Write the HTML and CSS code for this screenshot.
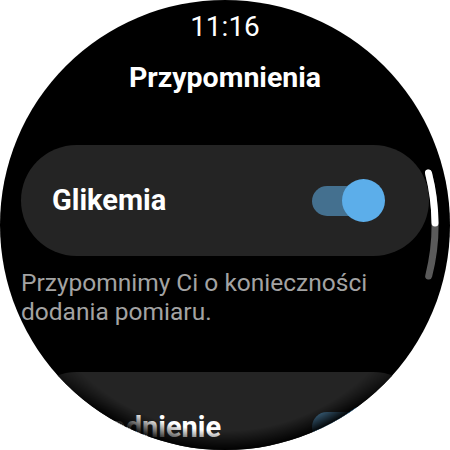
FILE: index.html
```html
<!DOCTYPE html>
<html lang="pl">
<head>
<meta charset="utf-8">
<link rel="stylesheet" href="styles.css">
</head>
<body>
<div class="watch">
  <div class="time">11:16</div>
  <h1 class="title">Przypomnienia</h1>
  <div class="card">
    <span class="label">Glikemia</span>
    <div class="toggle"><span class="track"></span><span class="thumb"></span></div>
  </div>
  <p class="desc">Przypomnimy Ci o konieczności dodania pomiaru.</p>
  <div class="card">
    <span class="label">Nawodnienie</span>
    <div class="toggle"><span class="track"></span><span class="thumb"></span></div>
  </div>
  <div class="vignette"></div>
  <svg class="scrollbar" width="450" height="450" viewBox="0 0 450 450">
    <path d="M428.5 173 A210 210 0 0 1 428.7 276" fill="none" stroke="#5a5a5a" stroke-width="7" stroke-linecap="round"/>
    <path d="M428.5 173 A210 210 0 0 1 435 223" fill="none" stroke="#ffffff" stroke-width="7" stroke-linecap="round"/>
  </svg>
</div>
</body>
</html>
```
FILE: styles.css
```css
html, body {
  margin: 0;
  padding: 0;
  background: #ffffff;
}
.watch {
  position: relative;
  width: 450px;
  height: 450px;
  border-radius: 50%;
  background: #000000;
  overflow: hidden;
  display: flex;
  flex-direction: column;
  font-family: Roboto, "Noto Sans", sans-serif;
  color: #ffffff;
}
.time {
  margin-top: 13px;
  font-size: 28px;
  line-height: 28px;
  font-weight: 400;
  text-align: center;
}
.title {
  margin: 23px 0 0;
  font-size: 28.5px;
  line-height: 28px;
  font-weight: 700;
  text-align: center;
}
.card {
  flex: none;
  margin: 53px 21px 0;
  height: 111px;
  border-radius: 56px;
  background: #242424;
  display: flex;
  align-items: center;
  justify-content: space-between;
  padding: 0 44px 0 31px;
}
.label {
  font-size: 29px;
  line-height: 1;
  font-weight: 700;
}
.toggle {
  display: grid;
  align-items: center;
  width: 73px;
  height: 43px;
}
.track, .thumb {
  grid-area: 1 / 1;
}
.track {
  justify-self: start;
  width: 58px;
  height: 30px;
  border-radius: 15px;
  background: #44708f;
}
.thumb {
  justify-self: end;
  width: 43px;
  height: 43px;
  border-radius: 50%;
  background: #5caeea;
}
.desc {
  margin: 13.4px 0 0;
  padding: 0 21px;
  font-size: 24.5px;
  line-height: 28.5px;
  color: #a3a3a3;
}
.desc + .card {
  margin-top: 45.6px;
}
.vignette {
  position: absolute;
  inset: 0;
  border-radius: 50%;
  background: radial-gradient(circle at 50% 50%, rgba(0,0,0,0) 206px, rgba(0,0,0,0.95) 225px);
  -webkit-mask-image: linear-gradient(to bottom, transparent 340px, #000 410px);
  mask-image: linear-gradient(to bottom, transparent 340px, #000 410px);
}
.scrollbar {
  position: absolute;
  left: 0;
  top: 0;
}
```
